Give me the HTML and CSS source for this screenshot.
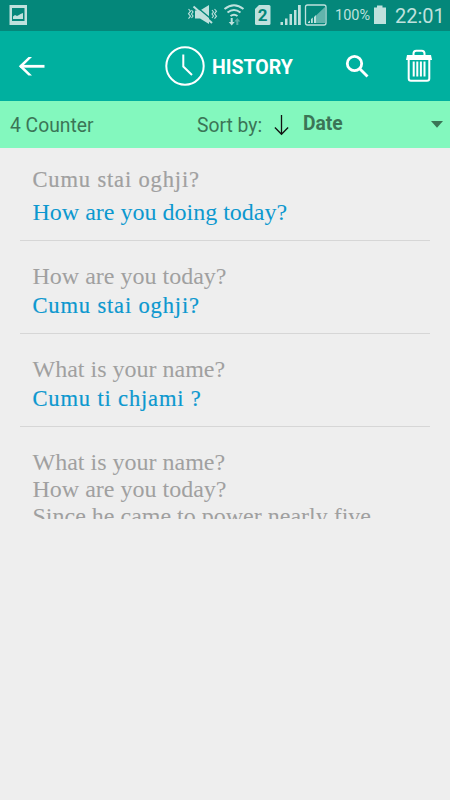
FILE: index.html
```html
<!DOCTYPE html>
<html lang="en">
<head>
  <meta charset="UTF-8">
  <meta name="viewport" content="width=device-width, initial-scale=1.0">
  <title>History</title>
  <link rel="stylesheet" href="styles.css">
</head>
<body>
  <div class="status-bar">
    <svg class="status-icon" width="180" height="31" viewBox="0 0 180 31">
      <path d="M9.500 5H27v20H9.500zM12 8v13h12.500V8z" fill-rule="evenodd"/>
      <path d="M13 19v-2.500l2-1.500 2 1 2-1 1.500-1 2.500-1V19z"/>
    </svg>
    <svg class="status-icon" width="150" height="31" viewBox="180 0 150 31">
      <!-- muted, vibrating -->
      <path d="M195 10.500h5l9-5.500v19l-9-5.500h-5z"/>
      <path d="M195 5.500l18 15" stroke="#04877a" stroke-width="1.500"/>
      <path d="M193.500 6.500l18.500 16.500" stroke="#bfe1dd" stroke-width="2"/>
      <path d="M188.500 9l2 2.200-2 2.500 2 2.500-2 2.500M191.500 10l1.500 2-1.500 2 1.500 2-1.500 2M212 10l1.500 2-1.500 2 1.500 2-1.500 2M214.500 9l2 2.200-2 2.500 2 2.500-2 2.500" fill="none" stroke="#bfe1dd" stroke-width="1.100"/>
      <!-- wifi -->
      <path d="M224.500 9q9.500-7.500 19 0M227.500 12.500q6.500-5 13 0M230.500 16q3.500-2.600 7 0" fill="none" stroke="#bfe1dd" stroke-width="2"/>
      <path d="M230.700 18v4h-2l3 3.500 3-3.500h-2v-4z"/>
      <path d="M236.300 25v-3.500h-2l3-3.500 3 3.500h-2V25z" opacity=".45"/>
      <!-- sim card -->
      <path d="M259 5h10q1.500 0 1.500 1.500v17q0 1.500-1.500 1.500h-12.500q-1.500 0-1.500-1.500V9z"/>
      <text class="sim-number" x="262.700" y="21" text-anchor="middle">2</text>
      <!-- signal -->
      <path d="M280.500 22h2.500v3h-2.500zM285 18.500h2.500V25H285zM289.500 14h2.500v11h-2.500zM294 10h2.500v15H294zM298 5h2.800v20H298z"/>
      <rect x="305.500" y="5" width="20.500" height="20" rx="2" fill="none" stroke="#bfe1dd" stroke-width="1.300"/>
      <path d="M316 15.500L325 7v16h-9z" opacity=".5"/>
      <path d="M308 23v-1l2-1.500V23zM311 23v-4l1.800-1.500V23zM314 23v-6l2-2v8z"/>
    </svg>
    <span class="battery-level">100%</span>
    <svg class="status-icon" width="13" height="31" viewBox="373 0 13 31">
      <path d="M377 5.500h5.500v2h3.500V24h-12V7.500h3z"/>
    </svg>
    <span class="time">22:01</span>
  </div>

  <header class="toolbar">
    <svg class="back" width="28" height="20" viewBox="0 0 28 20">
      <path d="M26.500 10.300H2"/>
      <path class="tip" d="M10.500 1H14L4.600 10.300 14 19.500h-3.500L.8 10.300z"/>
    </svg>
    <svg class="clock" width="40" height="40" viewBox="0 0 40 40">
      <circle cx="20" cy="20" r="18.700"/>
      <path d="M18.300 8.500v12l8.700 8.500"/>
    </svg>
    <h1>HISTORY</h1>
    <svg class="search" width="24" height="24" viewBox="0 0 24 24">
      <circle cx="9.500" cy="9.500" r="7.200"/>
      <path d="M14.500 14.500l8 8"/>
    </svg>
    <svg class="trash" width="28" height="34" viewBox="0 0 28 34">
      <path d="M8.500 6.500V4.500q0-2.800 2.800-2.800h5.400q2.800 0 2.800 2.800v2"/>
      <path d="M3.700 9v20.500q0 2.300 2.300 2.300h16q2.300 0 2.300-2.300V9"/>
      <path d="M8.700 12.500v15M12.300 12.500v15M15.900 12.500v15M19.500 12.500v15"/>
      <path class="lid" d="M2 6h24l1 5H1z"/>
    </svg>
  </header>

  <div class="sort-bar">
    <span class="counter">4 Counter</span>
    <span class="sort-label">Sort by:</span>
    <svg class="sort-arrow" width="15" height="22" viewBox="0 0 15 22">
      <path d="M7.500 1v19M.900 13.500l6.600 6.700 6.600-6.700"/>
    </svg>
    <span class="sort-value">Date</span>
    <svg class="dropdown" width="12" height="7" viewBox="0 0 12 7">
      <path d="M0 0h12L6 6.800z"/>
    </svg>
  </div>

  <ul class="history-list">
    <li class="roomy">
      <p class="corsican">Cumu stai oghji?</p>
      <p class="translation">How are you doing today?</p>
    </li>
    <li>
      <p>How are you today?</p>
      <p class="corsican translation">Cumu stai oghji?</p>
    </li>
    <li>
      <p>What is your name?</p>
      <p class="corsican translation">Cumu ti chjami ?</p>
    </li>
    <li>
      <p>What is your name?</p>
      <p>How are you today?</p>
      <p>Since he came to power nearly five</p>
    </li>
  </ul>
</body>
</html>
```
FILE: styles.css
```css
:root {
  --status-bg: #04877a;
  --status-text: #bfe1dd;
  --toolbar-bg: #00b09f;
  --sort-bg: #83f8be;
  --sort-text: #3b7556;
  --page-bg: #eeeeee;
  --source-text: #a0a0a0;
  --translation-text: #0c98cf;
}

body {
  margin: 0;
  height: 800px;
  overflow: hidden;
  background-color: var(--page-bg);
  font-family: Roboto, sans-serif;
}

h1, p, ul {
  margin: 0;
  padding: 0;
}

svg {
  display: block;
  flex: none;
}

.status-bar {
  display: flex;
  align-items: center;
  height: 31px;
  background-color: var(--status-bg);
  color: var(--status-text);
  white-space: nowrap;
}

.status-icon {
  fill: var(--status-text);
}

.sim-number {
  fill: var(--status-bg);
  font-size: 17px;
  font-weight: bold;
}

.battery-level {
  width: 38px;
  margin-left: 5px;
  font-size: 14.5px;
}

.time {
  margin-left: 9px;
  font-size: 20px;
}

.toolbar {
  display: flex;
  align-items: center;
  height: 70px;
  background-color: var(--toolbar-bg);
  color: #fff;
}

.toolbar svg {
  fill: none;
  stroke: #fff;
  stroke-width: 2;
}

.toolbar .back {
  margin-left: 18px;
  stroke-width: 2.800;
}

.toolbar .clock {
  margin-left: 119px;
}

.toolbar h1 {
  width: 82px;
  margin: 2px 0 0 7px;
  font-size: 19.5px;
  font-weight: bold;
}

.toolbar .search {
  margin-left: 51px;
  stroke-width: 2.800;
}

.toolbar .trash {
  margin-left: 36px;
}

.toolbar .lid,
.toolbar .tip {
  fill: #fff;
  stroke: none;
}

.sort-bar {
  display: flex;
  align-items: center;
  height: 47px;
  padding: 0 7px 0 10px;
  background-color: var(--sort-bg);
  color: var(--sort-text);
  font-size: 19.3px;
}

.counter {
  width: 187px;
  padding-top: 1px;
}

.sort-label {
  width: 77px;
  padding-top: 1px;
}

.sort-arrow {
  fill: none;
  stroke: #111;
  stroke-width: 1.300;
}

.sort-value {
  margin: -2px 0 0 14px;
  font-weight: bold;
}

.dropdown {
  margin-left: auto;
  fill: var(--sort-text);
}

.history-list {
  padding: 0 20px;
  list-style: none;
}

.history-list li {
  box-sizing: border-box;
  height: 93px;
  padding: 22px 0 0 12.5px;
  border-bottom: 1px solid #d6d6d6;
  overflow: hidden;
  color: var(--source-text);
  font-family: "Liberation Serif", serif;
  font-size: 24px;
  line-height: 27px;
  white-space: nowrap;
}

.history-list li:last-child {
  height: 92px;
  border-bottom: none;
}

.history-list .corsican {
  padding-top: 2px;
  font-size: 22.5px;
  letter-spacing: 0.85px;
  -webkit-text-stroke: 0.2px;
}

.history-list .translation {
  color: var(--translation-text);
}

.history-list .roomy {
  padding-top: 16px;
}

.roomy .translation {
  margin-top: 6px;
}
```
